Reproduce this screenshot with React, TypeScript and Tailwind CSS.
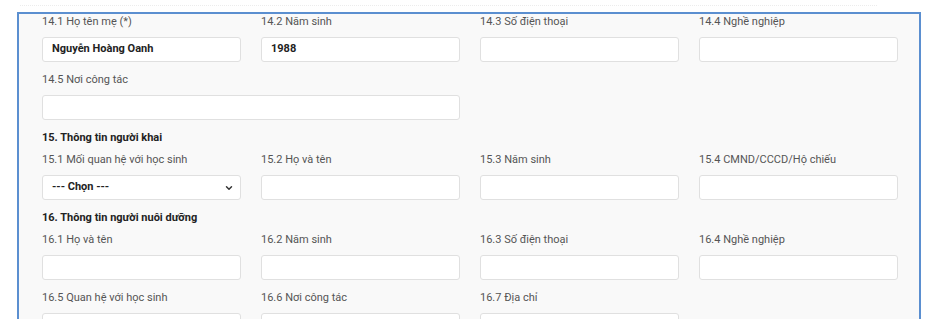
import { ChevronDown } from "lucide-react";

type Field = {
  label: string;
  value?: string;
  select?: boolean;
};

const ROW_14A: Field[] = [
  { label: "14.1 Họ tên mẹ (*)", value: "Nguyễn Hoàng Oanh" },
  { label: "14.2 Năm sinh", value: "1988" },
  { label: "14.3 Số điện thoại" },
  { label: "14.4 Nghề nghiệp" },
];

const ROW_15: Field[] = [
  { label: "15.1 Mối quan hệ với học sinh", value: "--- Chọn ---", select: true },
  { label: "15.2 Họ và tên" },
  { label: "15.3 Năm sinh" },
  { label: "15.4 CMND/CCCD/Hộ chiếu" },
];

const ROW_16A: Field[] = [
  { label: "16.1 Họ và tên" },
  { label: "16.2 Năm sinh" },
  { label: "16.3 Số điện thoại" },
  { label: "16.4 Nghề nghiệp" },
];

const ROW_16B: Field[] = [
  { label: "16.5 Quan hệ với học sinh" },
  { label: "16.6 Nơi công tác" },
  { label: "16.7 Địa chỉ" },
];

function FormField({ field }: { field: Field }) {
  return (
    <div className="flex flex-col">
      <span className="block h-[16px] leading-[16px] text-[11px] text-[#555] whitespace-nowrap">
        {field.label}
      </span>
      <div className="mt-[7px] h-[25px] flex items-center justify-between rounded-[3px] border border-[#e0e0e0] bg-white pl-[9px] pr-[6px]">
        <span className="text-[11px] font-bold text-[#222]">{field.value}</span>
        {field.select && (
          <ChevronDown size={10} strokeWidth={3.5} className="text-[#333]" />
        )}
      </div>
    </div>
  );
}

function Row({ fields }: { fields: Field[] }) {
  return (
    <div className="grid grid-cols-[199px_199px_199px_199px] gap-x-[20px]">
      {fields.map((f) => (
        <FormField key={f.label} field={f} />
      ))}
    </div>
  );
}

function Heading({ children }: { children: string }) {
  return (
    <div className="h-[16px] leading-[16px] text-[11px] font-bold text-[#222]">
      {children}
    </div>
  );
}

export default function App() {
  return (
    <div
      className="w-[937px] h-[333px] bg-white overflow-hidden"
      style={{ fontFamily: "Roboto, 'Liberation Sans', sans-serif" }}
    >
      <div className="h-[12px] pt-[5px] pl-[20px] pr-[60px]">
        <div className="border-t border-dotted border-[#ececec]" />
      </div>
      <div className="ml-[17px] w-[904px] h-[307px] overflow-hidden border-2 border-b-0 border-[#5b8fd0] bg-[#f9f9f9] pl-[23px]">
        <div className="flex flex-col">
          <Row fields={ROW_14A} />
          <div className="mt-[10px] w-[418px]">
            <FormField field={{ label: "14.5 Nơi công tác" }} />
          </div>
          <div className="mt-[10px]">
            <Heading>15. Thông tin người khai</Heading>
          </div>
          <div className="mt-[6px]">
            <Row fields={ROW_15} />
          </div>
          <div className="mt-[10px]">
            <Heading>16. Thông tin người nuôi dưỡng</Heading>
          </div>
          <div className="mt-[6px]">
            <Row fields={ROW_16A} />
          </div>
          <div className="mt-[10px]">
            <Row fields={ROW_16B} />
          </div>
        </div>
      </div>
    </div>
  );
}
